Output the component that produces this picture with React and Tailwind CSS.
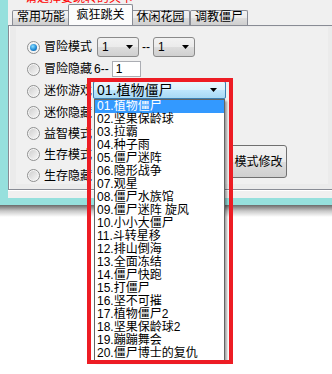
import React from "react";

const FONT = { fontFamily: "'Liberation Sans', 'Noto Sans CJK SC', sans-serif" };

const items = [
  "01.植物僵尸",
  "02.坚果保龄球",
  "03.拉霸",
  "04.种子雨",
  "05.僵尸迷阵",
  "06.隐形战争",
  "07.观星",
  "08.僵尸水族馆",
  "09.僵尸迷阵 旋风",
  "10.小小大僵尸",
  "11.斗转星移",
  "12.排山倒海",
  "13.全面冻结",
  "14.僵尸快跑",
  "15.打僵尸",
  "16.坚不可摧",
  "17.植物僵尸2",
  "18.坚果保龄球2",
  "19.蹦蹦舞会",
  "20.僵尸博士的复仇",
];

function Radio({ checked }) {
  return (
    <div className="w-[13px] h-[13px] rounded-full border border-[#8e8f8f] bg-[radial-gradient(circle_at_50%_50%,#e4e4e4_0%,#f4f4f4_60%,#ffffff_100%)] flex items-center justify-center shrink-0">
      {checked ? (
        <div className="w-[7px] h-[7px] rounded-full bg-[radial-gradient(circle_at_40%_35%,#8ce0ff_0%,#1f8ad6_55%,#0b4f8a_100%)]" />
      ) : (
        <div className="w-[9px] h-[9px] rounded-full bg-[linear-gradient(135deg,#cfcfcf,#f6f6f6)]" />
      )}
    </div>
  );
}

function Arrow() {
  return (
    <svg width="7" height="4" viewBox="0 0 7 4" className="shrink-0">
      <polygon points="0,0 7,0 3.5,4" fill="#000" />
    </svg>
  );
}

function SmallCombo({ w }) {
  return (
    <div
      className={`${w} h-[20px] rounded-[3px] border border-[#8a8a8a] bg-[linear-gradient(#f2f2f2,#ebebeb_50%,#dddddd_51%,#cfcfcf)] flex items-center justify-between pl-[4px] pr-[5px] text-[12px] shrink-0`}
    >
      <span>1</span>
      <Arrow />
    </div>
  );
}

function Row({ h, label, children }) {
  return (
    <div className={`${h} flex items-center`}>
      <Radio checked={label === "冒险模式"} />
      <span className="ml-[4px] text-[12px] leading-[12px] whitespace-nowrap">{label}</span>
      {children}
    </div>
  );
}

function Tab({ label, selected, w }) {
  if (selected) {
    return (
      <div className={`${w} h-[21px] -mx-[2px] shrink-0 relative z-10 border border-b-0 border-[#898c95] rounded-t-[2px] bg-[#fcfcfc] flex items-start justify-center pt-[3px] text-[12px] leading-[14px]`}>
        {label}
      </div>
    );
  }
  return (
    <div className={`${w} h-[15px] shrink-0 border border-b-0 border-[#898c95] rounded-t-[2px] bg-[linear-gradient(#f3f3f3,#ebebeb_50%,#dddddd_51%,#cfcfcf)] flex items-start justify-center text-[12px] leading-[13px]`}>
      {label}
    </div>
  );
}

export default function App() {
  return (
    <div className="w-[332px] h-[374px] bg-white relative overflow-hidden text-black" style={FONT}>
      {/* window */}
      <div className="h-[205px] flex flex-col bg-[#96e0dd]">
        <div className="h-[198px] flex">
          <div className="w-[8px] shrink-0 bg-[#96e0dd]" />
          <div className="w-[324px] shrink-0 bg-[#f0f0f0] flex flex-col">
            <div className="h-[4px] overflow-hidden pl-[17px]">
              <div className="text-[12px] leading-[12px] text-[#ff0000] -mt-[8px] whitespace-nowrap">请选择要跳转的关卡</div>
            </div>
            <div className="flex items-end pl-[4px] h-[21px]">
              <Tab label="常用功能" w="w-[58px]" />
              <Tab label="疯狂跳关" w="w-[65px]" selected />
              <Tab label="休闲花园" w="w-[59px]" />
              <Tab label="调教僵尸" w="w-[58px]" />
            </div>
            <div className="h-[165px] border-t border-b border-l border-[#898c95] bg-[#ebebeb] shadow-[inset_1px_0_0_#ffffff] relative">
              <div className="absolute left-[7px] top-[1px] right-[4px] bottom-[5px] bg-[#f0f0f0]" />
              <div className="relative flex pt-[10px] pl-[18px]">
                <div className="flex flex-col w-[203px] shrink-0">
                  <Row h="h-[22px]" label="冒险模式">
                    <div className="ml-[5px]"><SmallCombo w="w-[42px]" /></div>
                    <span className="text-[12px] mx-[3px]">--</span>
                    <SmallCombo w="w-[42px]" />
                  </Row>
                  <Row h="h-[22px]" label="冒险隐藏">
                    <span className="text-[12px] ml-[2px]">6--</span>
                    <div className="ml-[3px] w-[29px] h-[16px] border border-[#abadb3] bg-white text-[12px] leading-[14px] pl-[3px]">1</div>
                  </Row>
                  <Row h="h-[22px]" label="迷你游戏" />
                  <Row h="h-[21px]" label="迷你隐藏" />
                  <Row h="h-[21px]" label="益智模式" />
                  <Row h="h-[21px]" label="生存模式" />
                  <Row h="h-[21px]" label="生存隐藏" />
                </div>
                <div className="pt-[109px] shrink-0">
                  <div className="w-[57px] h-[33px] rounded-[3px] border border-[#707070] bg-[linear-gradient(#f2f2f2,#ebebeb_50%,#dddddd_51%,#cfcfcf)] flex items-center justify-center text-[12px]">
                    模式修改
                  </div>
                </div>
              </div>
            </div>
            <div className="h-[1px] bg-white" />
          </div>
        </div>
        <div className="h-[7px] bg-[#96e0dd]" />
      </div>
      <div className="h-[12px] bg-[linear-gradient(#6a6a6a,#c8c8c8_50%,#ffffff)]" />

      {/* open combo */}
      <div className="absolute left-[93px] top-[81px] w-[133px] h-[18px] border border-[#3c7fb1] rounded-[2px] bg-[linear-gradient(#eaf6fd,#d9f0fc_50%,#bee6fd_51%,#a7d9f5)] flex items-center justify-between pl-[3px] pr-[8px]">
        <span className="text-[14px] leading-[14px] whitespace-nowrap">01.植物僵尸</span>
        <Arrow />
      </div>

      {/* dropdown list */}
      <div className="absolute left-[94px] top-[99px] w-[131px] h-[262px] bg-white border border-[#646464] shadow-[2px_2px_2px_rgba(0,0,0,0.35)] overflow-hidden">
        {items.map((t, i) => (
          <div
            key={t}
            className={`h-[13px] pl-[2px] text-[12px] leading-[13px] whitespace-nowrap ${i === 0 ? "bg-[#3399ff] text-white" : "text-black"}`}
          >
            {t}
          </div>
        ))}
      </div>

      {/* red highlight */}
      <div className="absolute left-[87px] top-[78px] w-[146px] h-[286px] border-4 border-[#ed1c24]" />
    </div>
  );
}
